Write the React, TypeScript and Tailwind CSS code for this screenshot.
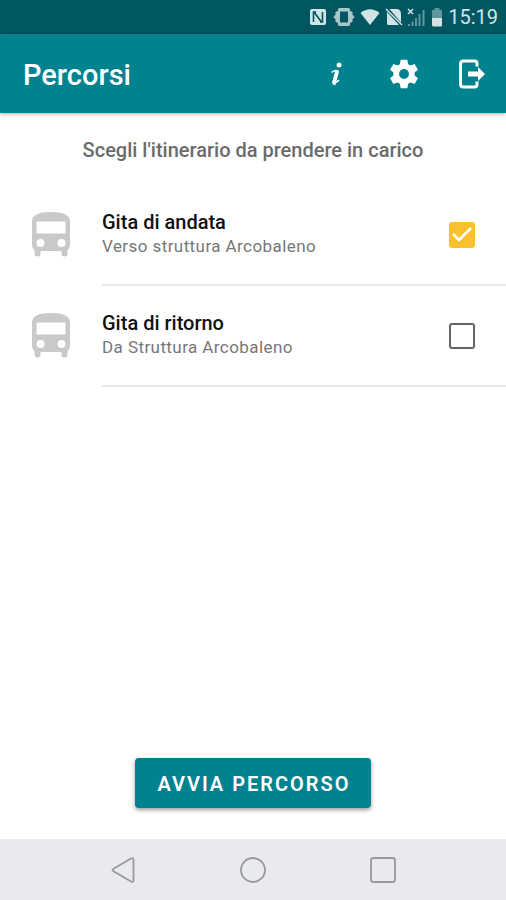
import { useState } from "react";

type Trip = { id: string; title: string; detail: string };

const trips: Trip[] = [
  { id: "andata", title: "Gita di andata", detail: "Verso struttura Arcobaleno" },
  { id: "ritorno", title: "Gita di ritorno", detail: "Da Struttura Arcobaleno" },
];

function StatusBar() {
  return (
    <div className="flex h-[34px] shrink-0 items-center justify-end bg-[#005661] pr-2 text-[#d3e4e6]">
      <svg className="mr-[6px] h-[18px] w-[18px]" viewBox="0 0 18 18" aria-hidden="true">
        <rect x="1" y="1" width="16" height="16" rx="2" fill="currentColor" />
        <path d="M7 4H4.500v10M5 4l7.500 10M11 14h2.500V4" fill="none" stroke="#005661" strokeWidth="1.600" />
      </svg>
      <svg className="mr-[5px] h-[18px] w-[22px]" viewBox="0 0 22 18" aria-hidden="true">
        <path d="M6.500 0h9Q17 0 17 1.500V3l2.500 1V6.500L21.500 9l-2 2.500V14L17 15v1.500Q17 18 15.500 18h-9Q5 18 5 16.500V15l-2.500-1v-2.500L.5 9l2-2.500V4L5 3V1.500Q5 0 6.500 0Z" fill="currentColor" opacity=".8" />
        <rect x="7" y="3.500" width="8" height="11" fill="#005661" />
      </svg>
      <svg className="mr-[5px] h-[18px] w-5" viewBox="0 0 20 18" aria-hidden="true">
        <path d="M.5 5Q10-2.500 19.500 5L10 17Z" fill="currentColor" />
      </svg>
      <svg className="mr-[4px] h-[18px] w-[18px]" viewBox="0 0 18 18" aria-hidden="true">
        <path d="M4.500 1H11q5 0 5 5v8.500ZM2 4 14 17H3.500Q2 17 2 15.500Z" fill="currentColor" />
        <path d="M1 1l16 16" stroke="currentColor" strokeWidth="1.500" />
      </svg>
      <svg className="mr-[6px] h-5 w-[18px]" viewBox="0 0 18 20" aria-hidden="true">
        <path d="M1 2l5 5M6 2 1 7" stroke="currentColor" strokeWidth="1.500" />
        <path d="M2 17v2M5.500 14.500V19M9 11v8M12.500 7v12M16.500 3v16" stroke="currentColor" strokeWidth="2" opacity=".45" />
      </svg>
      <svg className="mr-[5px] h-[19px] w-3" viewBox="0 0 12 19" aria-hidden="true">
        <path d="M3.500 0h5v2H11v9H1V2h2.500Z" fill="currentColor" opacity=".45" />
        <path d="M1 10h10v7q0 1.500-1.500 1.500h-7Q1 18.500 1 17Z" fill="currentColor" />
      </svg>
      <time className="text-[20px] leading-6">15:19</time>
    </div>
  );
}

function AppHeader() {
  return (
    <header className="z-10 flex h-[79px] shrink-0 items-center justify-between bg-[#00838f] pr-4 pl-[23px] text-white shadow-[0_1px_4px_rgba(0,0,0,0.35)]">
      <h1 className="pt-[2px] text-[29px] leading-8 font-medium">Percorsi</h1>
      <div className="flex items-center gap-8">
        <button type="button" aria-label="Informazioni" className="grid h-9 w-9 place-items-center">
          <svg className="h-6 w-3" viewBox="0 0 12 24" aria-hidden="true">
            <circle cx="9" cy="3" r="2.500" fill="currentColor" />
            <path d="M1.500 10.300Q4 9 5.600 8.600Q8.700 8 7.900 10.800L5.500 19.500Q5 21.500 9 18.200" fill="none" stroke="currentColor" strokeWidth="1.500" />
            <path d="M6.900 9 3.800 20.500Q4 22 5.300 21" fill="none" stroke="currentColor" strokeWidth="3.400" />
          </svg>
        </button>
        <button type="button" aria-label="Impostazioni" className="grid h-9 w-9 place-items-center">
          <svg className="h-[34px] w-[34px]" viewBox="0 0 24 24" fill="currentColor" aria-hidden="true">
            <path d="M19.430 12.980c.04-.32.07-.64.07-.98s-.03-.66-.07-.98l2.110-1.650c.19-.15.24-.42.12-.64l-2-3.460c-.12-.22-.39-.3-.61-.22l-2.490 1c-.52-.4-1.080-.73-1.690-.98l-.38-2.650A.49.49 0 0 0 14 2h-4c-.25 0-.46.18-.49.42l-.38 2.650c-.61.25-1.170.59-1.690.98l-2.490-1c-.23-.09-.49 0-.61.22l-2 3.460c-.13.22-.07.49.12.64l2.110 1.650c-.04.32-.07.65-.07.98s.03.66.07.98l-2.110 1.650c-.19.15-.24.42-.12.64l2 3.460c.12.22.39.3.61.22l2.490-1c.52.4 1.080.73 1.690.98l.38 2.650c.03.24.24.42.49.42h4c.25 0 .46-.18.49-.42l.38-2.650c.61-.25 1.170-.59 1.690-.98l2.490 1c.23.09.49 0 .61-.22l2-3.460c.12-.22.07-.49-.12-.64l-2.110-1.650zM12 15.500a3.500 3.500 0 1 1 0-7 3.500 3.500 0 0 1 0 7z" />
          </svg>
        </button>
        <button type="button" aria-label="Esci" className="grid h-9 w-9 place-items-center">
          <svg className="h-[30px] w-7" viewBox="0 0 28 30" aria-hidden="true">
            <path d="M19 7.500V4.500Q19 2 16.500 2h-11Q2.500 2 2.500 5v20q0 3 3 3h11q2.500 0 2.500-2.500V22.500" fill="none" stroke="currentColor" strokeWidth="3" />
            <path d="M10 12.500h10V8l7 7-7 7v-4.500H10Z" fill="currentColor" />
          </svg>
        </button>
      </div>
    </header>
  );
}

function BusIcon() {
  return (
    <svg className="h-[45px] w-[38px]" viewBox="0 0 38 45" aria-hidden="true">
      <path fillRule="evenodd" fill="#c9c9c9" d="M0 9.500Q0 0 19 0T38 9.500V33Q38 36 35.500 38V41.500Q35.500 44.500 32.500 44.500T29.500 41.500V39H8.500V41.500Q8.500 44.500 5.500 44.500T2.500 41.500V38Q0 36 0 33ZM4.500 9.500V21.500H33.500V9.500ZM8.500 27a4 4 0 1 0 0 8 4 4 0 0 0 0-8ZM29.500 27a4 4 0 1 0 0 8 4 4 0 0 0 0-8Z" />
    </svg>
  );
}

function TripRow({ trip, checked, onToggle }: { trip: Trip; checked: boolean; onToggle: () => void }) {
  return (
    <li>
      <label htmlFor={trip.id} className="flex cursor-pointer pl-8">
        <span className="flex w-[70px] shrink-0 items-center pb-[2px]">
          <BusIcon />
        </span>
        <span className="flex h-[101px] flex-1 items-center justify-between border-b-2 border-[#e8e8e8] pr-[31px]">
          <span className="flex flex-col pb-[2px]">
            <span className="text-[20px] leading-6 font-medium text-[#111]">{trip.title}</span>
            <span className="text-[17px] leading-6 tracking-wide text-[#777]">{trip.detail}</span>
          </span>
          <span className="grid place-items-center">
            <input
              id={trip.id}
              type="checkbox"
              checked={checked}
              onChange={onToggle}
              className="col-start-1 row-start-1 h-[26px] w-[26px] appearance-none rounded-[3px] border-2 border-[#666] checked:border-[#fbc02d] checked:bg-[#fbc02d]"
            />
            {checked && (
              <svg className="pointer-events-none col-start-1 row-start-1 h-[26px] w-[26px]" viewBox="0 0 26 26" aria-hidden="true">
                <path d="M4 12l6 6L22 6" fill="none" stroke="white" strokeWidth="2.700" />
              </svg>
            )}
          </span>
        </span>
      </label>
    </li>
  );
}

function NavigationBar() {
  return (
    <nav aria-label="Sistema" className="flex h-[61px] shrink-0 items-center justify-center gap-[102px] bg-[#e8eaed] text-[#97999b]">
      <button type="button" aria-label="Indietro">
        <svg className="h-7 w-7" viewBox="0 0 28 28" fill="none" stroke="currentColor" strokeWidth="1.800" aria-hidden="true">
          <path d="M4.500 12.800 22 2.500Q24.500 1.500 24.500 4V24Q24.500 26.500 22 25.500L4.500 15.200Q2.500 14 4.500 12.800Z" />
        </svg>
      </button>
      <button type="button" aria-label="Home">
        <svg className="h-7 w-7" viewBox="0 0 28 28" fill="none" stroke="currentColor" strokeWidth="1.800" aria-hidden="true">
          <circle cx="14" cy="14" r="12" />
        </svg>
      </button>
      <button type="button" aria-label="Recenti">
        <svg className="h-7 w-7" viewBox="0 0 28 28" fill="none" stroke="currentColor" strokeWidth="1.800" aria-hidden="true">
          <rect x="2" y="2" width="24" height="24" rx="2.500" />
        </svg>
      </button>
    </nav>
  );
}

export default function App() {
  const [selected, setSelected] = useState("andata");

  return (
    <div className="flex min-h-screen flex-col bg-white font-[Roboto,sans-serif]">
      <StatusBar />
      <AppHeader />
      <main className="flex flex-1 flex-col">
        <h2 className="px-4 pt-[25px] pb-[23px] text-center text-[20px] leading-6 font-medium text-[#6b6b6b]">
          Scegli l'itinerario da prendere in carico
        </h2>
        <ul>
          {trips.map((trip) => (
            <TripRow
              key={trip.id}
              trip={trip}
              checked={selected === trip.id}
              onToggle={() => setSelected(selected === trip.id ? "" : trip.id)}
            />
          ))}
        </ul>
        <button
          type="button"
          className="mt-auto mb-[31px] h-[50px] self-center rounded-[4px] bg-[#00838f] pt-[2px] pr-5 pl-[22px] text-[20px] leading-6 font-semibold tracking-widest text-white shadow-[0_2px_4px_rgba(0,0,0,0.4)]"
        >
          AVVIA PERCORSO
        </button>
      </main>
      <NavigationBar />
    </div>
  );
}
